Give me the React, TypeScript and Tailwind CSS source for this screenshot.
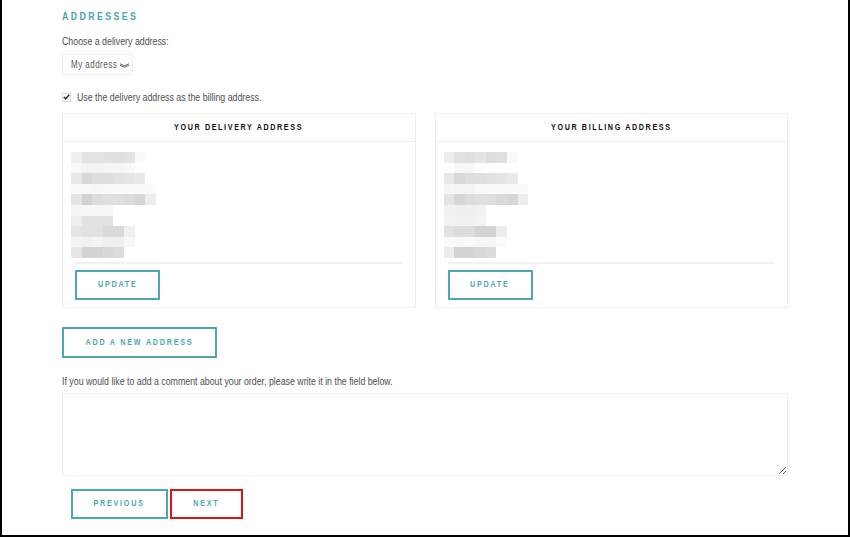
import type { CSSProperties, ReactNode } from "react";

const SANS: CSSProperties = {
  fontFamily: "'Liberation Sans', Arial, sans-serif",
};

// pixelated (blurred) address lines, one grey per 10px cell
const DELIVERY_PIXELS: string[][] = [
  ["#efefef", "#e3e3e5", "#e3e3e5", "#e1e1e3", "#dfdee0", "#e3e3e3", "#fafafa"],
  ["#f8f8f8", "#f3f3f3", "#f3f3f3", "#f5f5f5", "#f6f6f6", "#f8f8f8"],
  ["#e8e8e8", "#d9d9db", "#dedee0", "#dedee0", "#e2e2e2", "#e5e5e5", "#e9e9eb"],
  ["#fafafa", "#f9f9f9", "#f7f7f7", "#f9f9f9", "#fafafa", "#fafafa", "#fbfbfb", "#fbfbfb"],
  ["#e4e4e4", "#d2d2d2", "#dcdcde", "#dfdfe1", "#dfdfe1", "#dcdcdc", "#d7d7d7", "#ededed"],
  ["#f5f5f5", "#f6f6f6", "#f6f6f6", "#f7f7f7"],
  ["#eeeeee", "#e2e2e2", "#e2e2e2", "#e2e2e2"],
  ["#e5e5e5", "#e1e1e1", "#e1e1e1", "#dadada", "#dadada", "#f0f0f0"],
  ["#f4f4f4", "#f1f1f1", "#f4f4f4", "#efefef", "#efefef", "#f7f7f7"],
  ["#e6e6e6", "#d3d3d3", "#d3d3d3", "#d8d8d8", "#dcdcdc"],
];

const BILLING_PIXELS: string[][] = [
  ["#eeeeee", "#e2e2e4", "#dfdfe1", "#e3e3e5", "#dddcde", "#dfdfdf", "#fafafa"],
  ["#ffffff", "#f7f7f7", "#f7f7f7"],
  ["#e8e8e8", "#d9d9db", "#dedee0", "#dedee0", "#e2e2e2", "#e5e5e5", "#e9e9eb"],
  ["#f6f6f6", "#f4f4f4", "#f3f3f3", "#f9f9f9", "#fafafa", "#fafafa", "#fbfbfb", "#fbfbfb"],
  ["#e4e4e4", "#d6d6d6", "#dcdcde", "#dfdfe1", "#dfdfe1", "#dadada", "#d7d7d7", "#ededed"],
  ["#f1f1f1", "#f0f0f0", "#f0f0f0", "#f2f2f2"],
  ["#f2f2f2", "#f1f1f1", "#f1f1f1", "#f3f3f3"],
  ["#e2e2e2", "#dcdcdc", "#dcdcdc", "#d3d3d3", "#d3d3d3", "#ececec"],
  ["#fafafa", "#f8f8f8", "#fafafa", "#f7f7f7", "#f7f7f7", "#fbfbfb"],
  ["#ececec", "#d3d3d3", "#d3d3d3", "#d8d8d8", "#dcdcdc"],
];

// the site uses a condensed face; squeeze Liberation Sans to match
function Narrow({ children, left = false }: { children: ReactNode; left?: boolean }) {
  return (
    <span
      className={`inline-block whitespace-nowrap scale-x-[0.8] ${left ? "origin-left" : "origin-center"}`}
    >
      {children}
    </span>
  );
}

function Pixelated({ rows }: { rows: string[][] }) {
  return (
    <div className="flex flex-col">
      {rows.map((row, i) => (
        <div key={i} className="flex h-[10.6px]">
          {row.map((c, j) => (
            <div key={j} className="w-[10.6px] h-full" style={{ background: c }} />
          ))}
        </div>
      ))}
    </div>
  );
}

function OutlineButton({
  label,
  className = "",
}: {
  label: string;
  className?: string;
}) {
  return (
    <button
      type="button"
      className={`h-[30px] border-2 border-[#4ba8ae] bg-white text-[#4ba8ae] text-[9px] font-bold tracking-[2.2px] uppercase ${className}`}
      style={SANS}
    >
      <Narrow>{label}</Narrow>
    </button>
  );
}

function AddressCard({ title, rows }: { title: string; rows: string[][] }) {
  return (
    <div className="flex-1 border border-[#eeeeee] bg-white">
      <div className="h-[28px] flex items-center justify-center border-b border-[#eeeeee]">
        <span className="text-[9px] font-bold tracking-[2px] text-[#111]" style={SANS}>
          <Narrow>{title}</Narrow>
        </span>
      </div>
      <div className="pl-[8px] pt-[10px]">
        <Pixelated rows={rows} />
      </div>
      <div className="mx-[12px] mt-[4px] h-[2px] bg-[#f2f2f2]" />
      <div className="px-[12px] pt-[6px] pb-[7px]">
        <OutlineButton label="Update" className="w-[85px]" />
      </div>
    </div>
  );
}

export default function App() {
  return (
    <div className="w-[850px] h-[537px] bg-white border-l-2 border-r-2 border-b-2 border-black overflow-hidden">
      <div className="w-[726px] mx-auto text-[#4f4f4f] text-[11px]" style={SANS}>
        {/* Title */}
        <h2 className="pt-[10px] text-[11px] font-bold tracking-[3px] text-[#4ba8ae] leading-[12px]">
          <Narrow left>ADDRESSES</Narrow>
        </h2>

        <p className="mt-[13px] leading-[12px]">
          <Narrow left>Choose a delivery address:</Narrow>
        </p>

        {/* Select */}
        <div className="relative mt-[7px] w-[71px] h-[21px] border border-[#eeeeee] flex items-center pl-[8px] text-[10px] tracking-[0.6px] text-[#555]">
          <Narrow left>My address</Narrow>
          <svg
            className="absolute right-[2px] top-[8px]"
            width="11"
            height="5"
            viewBox="0 0 11 5"
            fill="none"
            stroke="#666"
            strokeWidth="1"
          >
            <path d="M1 0.8 L5.5 2.8 L10 0.8" />
            <path d="M1 2.2 L5.5 4.2 L10 2.2" />
          </svg>
        </div>

        {/* Checkbox */}
        <div className="mt-[16px] flex items-center gap-[6px] leading-[12px]">
          <span className="w-[9px] h-[9px] border border-[#ddd] bg-white flex items-center justify-center">
            <svg width="7" height="6" viewBox="0 0 7 6" fill="none" stroke="#333" strokeWidth="1.6">
              <path d="M0.8 3 L2.7 4.8 L6.2 0.8" />
            </svg>
          </span>
          <Narrow left>Use the delivery address as the billing address.</Narrow>
        </div>

        {/* Address cards */}
        <div className="mt-[10px] flex gap-[19px]">
          <AddressCard title="YOUR DELIVERY ADDRESS" rows={DELIVERY_PIXELS} />
          <AddressCard title="YOUR BILLING ADDRESS" rows={BILLING_PIXELS} />
        </div>

        <OutlineButton label="Add a new address" className="mt-[19px] w-[155px] h-[31px]" />

        <p className="mt-[17px] leading-[12px]">
          <Narrow left>
            If you would like to add a comment about your order, please write it in the field below.
          </Narrow>
        </p>

        <textarea className="mt-[6px] block w-full h-[83px] border border-[#eeeeee] outline-none" />

        <div className="mt-[13px] ml-[9px] flex gap-[2px]">
          <OutlineButton label="Previous" className="w-[97px]" />
          <button
            type="button"
            className="w-[73px] h-[30px] border-2 border-[#d9141b] bg-white text-[#4ba8ae] text-[9px] font-bold tracking-[2.2px]"
            style={SANS}
          >
            <Narrow>NEXT</Narrow>
          </button>
        </div>
      </div>
    </div>
  );
}
